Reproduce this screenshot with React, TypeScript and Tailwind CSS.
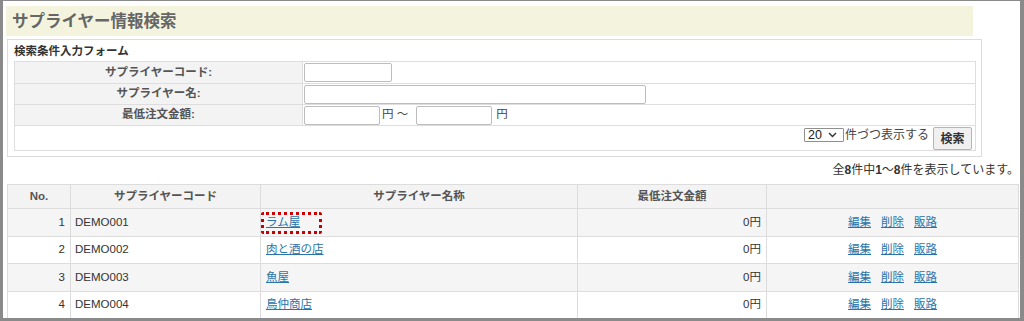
import React from "react";

const font = { fontFamily: '"Liberation Sans", "Noto Sans CJK JP", sans-serif' };

const rows = [
  { no: 1, code: "DEMO001", name: "ラム屋", amt: "0円", highlight: true },
  { no: 2, code: "DEMO002", name: "肉と酒の店", amt: "0円" },
  { no: 3, code: "DEMO003", name: "魚屋", amt: "0円" },
  { no: 4, code: "DEMO004", name: "鳥仲商店", amt: "0円" },
];

export default function App() {
  return (
    <div
      className="w-[1024px] h-[321px] overflow-hidden bg-white border-l-[3px] border-t border-r-[4px] border-b-[3px] border-[#8a8a8a] text-[11.5px] text-[#333]"
      style={font}
    >
      {/* title */}
      <div className="ml-[3px] mt-[5px] w-[967px] h-[30px] bg-[#f4f4de] flex items-center pl-[6px]">
        <span className="text-[16.5px] font-bold text-[#666] leading-none">サプライヤー情報検索</span>
      </div>

      {/* search form */}
      <div className="ml-[4px] mt-[3px] w-[975px] h-[118px] border border-[#dcdcdc] pl-[6px] pr-[5px]">
        <div className="h-[21px] flex items-center font-bold text-[#333] text-[11.5px] pt-[2px]">検索条件入力フォーム</div>
        <table className="w-[962px] border-collapse">
          <tbody>
            <tr className="h-[22px]">
              <td className="w-[288px] bg-[#f3f3f3] border border-[#dedede] text-center font-bold text-[#555]">サプライヤーコード:</td>
              <td className="border border-[#dedede] pl-[1px]">
                <div className="w-[88px] h-[19px] border border-[#bdbdbd] rounded-[2px] bg-white" />
              </td>
            </tr>
            <tr className="h-[21px]">
              <td className="bg-[#f3f3f3] border border-[#dedede] text-center font-bold text-[#555]">サプライヤー名:</td>
              <td className="border border-[#dedede] pl-[1px]">
                <div className="w-[342px] h-[19px] border border-[#bdbdbd] rounded-[2px] bg-white" />
              </td>
            </tr>
            <tr className="h-[21px]">
              <td className="bg-[#f3f3f3] border border-[#dedede] text-center font-bold text-[#555]">最低注文金額:</td>
              <td className="border border-[#dedede] pl-[1px]">
                <div className="flex items-center">
                  <div className="w-[76px] h-[19px] border border-[#bdbdbd] rounded-[2px] bg-white" />
                  <span className="ml-[2px] text-[#444]">円 ～</span>
                  <div className="ml-[8px] w-[76px] h-[19px] border border-[#bdbdbd] rounded-[2px] bg-white" />
                  <span className="ml-[4px] text-[#444]">円</span>
                </div>
              </td>
            </tr>
            <tr className="h-[25px]">
              <td colSpan={2} className="border border-[#dedede] pr-[3px] align-top pt-[1px]">
                <div className="flex justify-end items-start">
                  <div className="mt-[1px] w-[40px] h-[14px] border border-[#8f8f8f] rounded-[1px] bg-white flex items-center pl-[3px] text-[12.5px] text-[#222] leading-none">
                    <span>20</span>
                    <svg className="ml-[6px]" width="9" height="6" viewBox="0 0 9 6">
                      <path d="M1 1 L4.5 4.5 L8 1" fill="none" stroke="#333" strokeWidth="1.4" />
                    </svg>
                  </div>
                  <span className="ml-[1px] text-[#444] leading-[16px] text-[12px]">件づつ表示する</span>
                  <div className="ml-[4px] w-[39px] h-[23px] border border-[#b5b5b5] rounded-[2px] bg-[#f0f0f0] flex items-center justify-center font-bold text-[#333] text-[12px]">
                    検索
                  </div>
                </div>
              </td>
            </tr>
          </tbody>
        </table>
      </div>

      {/* count */}
      <div className="mt-[5px] h-[16px] pr-[1px] text-right text-[#333] leading-[16px] text-[12px]">
        全<b>8</b>件中<b>1</b>～<b>8</b>件を表示しています。
      </div>

      {/* results */}
      <table className="ml-[4px] mt-[6px] w-[1011px] border-collapse table-fixed">
        <colgroup>
          <col className="w-[63px]" />
          <col className="w-[190px]" />
          <col className="w-[317px]" />
          <col className="w-[189px]" />
          <col className="w-[252px]" />
        </colgroup>
        <thead>
          <tr className="h-[24px] bg-[#f3f3f3]">
            <th className="border border-[#dcdcdc] font-bold text-[#555] text-center">No.</th>
            <th className="border border-[#dcdcdc] font-bold text-[#555] text-center">サプライヤーコード</th>
            <th className="border border-[#dcdcdc] font-bold text-[#555] text-center">サプライヤー名称</th>
            <th className="border border-[#dcdcdc] font-bold text-[#555] text-center">最低注文金額</th>
            <th className="border border-[#dcdcdc]"></th>
          </tr>
        </thead>
        <tbody>
          {rows.map((r, i) => (
            <tr key={r.no} className={i % 2 === 0 ? "h-[28px] bg-[#f5f5f5]" : "h-[27px] bg-white"}>
              <td className="border border-[#dcdcdc] text-right pr-[5px]">{r.no}</td>
              <td className="border border-[#dcdcdc] pl-[4px]">{r.code}</td>
              <td className="border border-[#dcdcdc] pl-[5px] relative">
                <a className="text-[#2a73a8] underline">{r.name}</a>
                {r.highlight && (
                  <div className="absolute left-[0px] top-[3px] w-[61px] h-[22px] border-[3px] border-dotted border-[#cc0000] rounded-[3px]" />
                )}
              </td>
              <td className="border border-[#dcdcdc] text-right pr-[5px]">{r.amt}</td>
              <td className="border border-[#dcdcdc] text-center">
                <a className="text-[#2a73a8] underline">編集</a>
                <a className="ml-[10px] text-[#2a73a8] underline">削除</a>
                <a className="ml-[10px] text-[#2a73a8] underline">販路</a>
              </td>
            </tr>
          ))}
        </tbody>
      </table>
    </div>
  );
}
